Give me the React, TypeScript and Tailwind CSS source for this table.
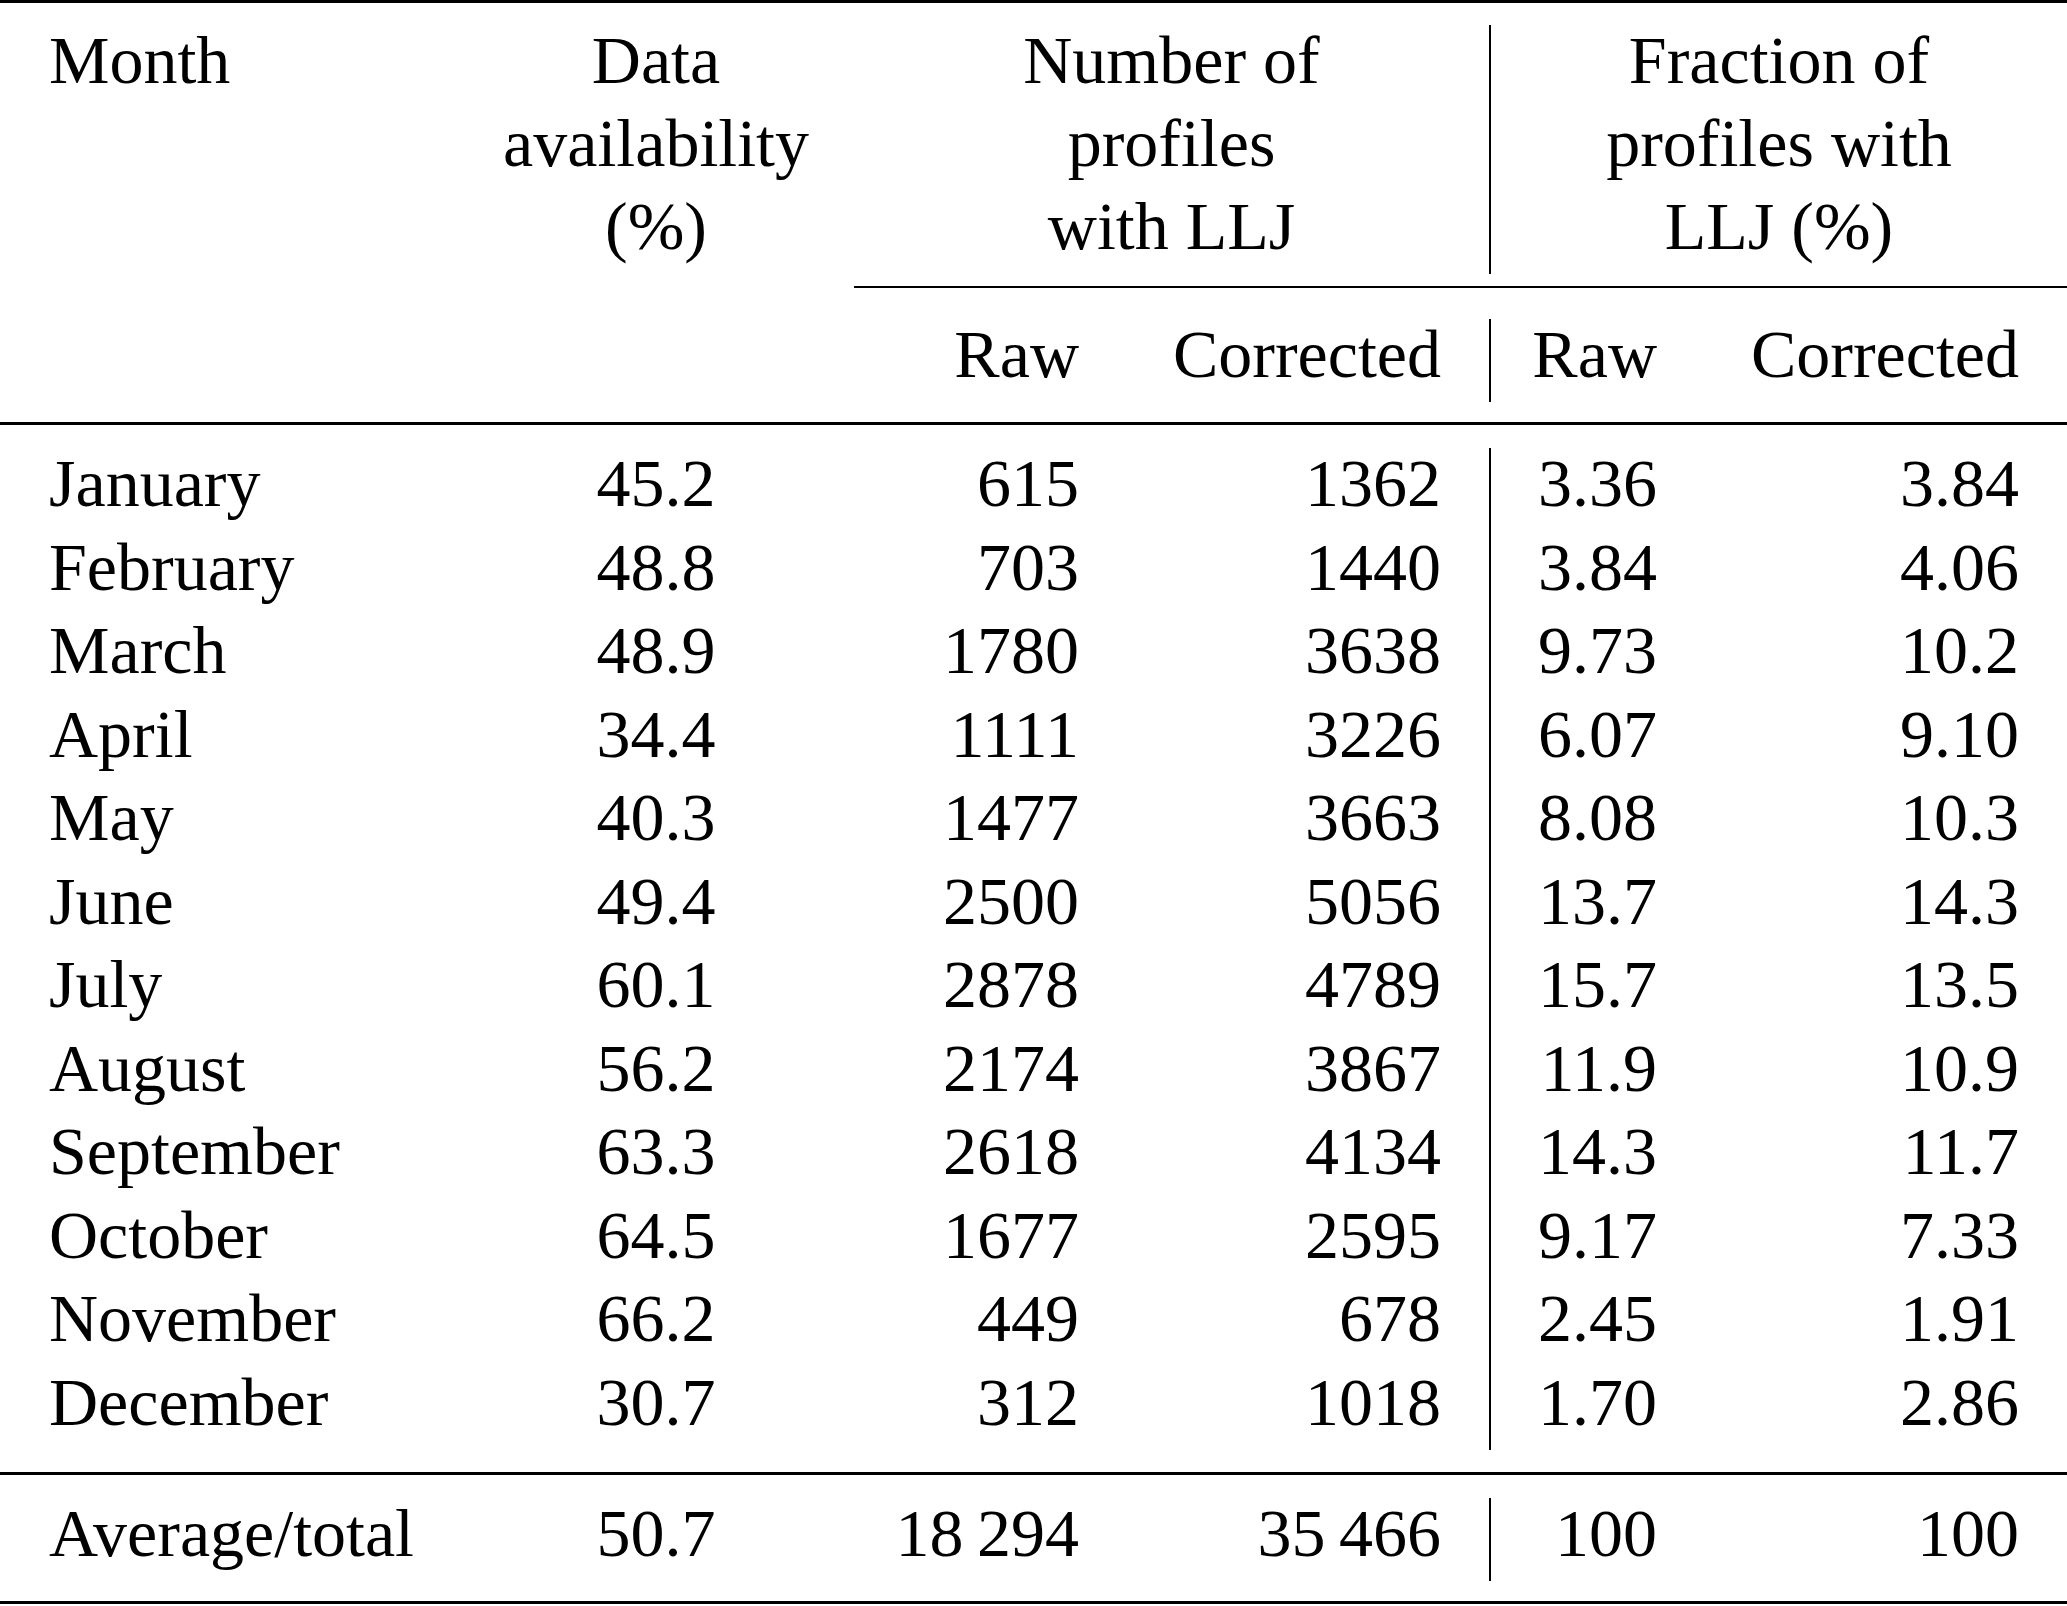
import React from 'react'

const grid = 'grid grid-cols-[458px_396px_273px_362px_216px_362px]'

const rows = [
    ['January', '45.2', '615', '1362', '3.36', '3.84'],
    ['February', '48.8', '703', '1440', '3.84', '4.06'],
    ['March', '48.9', '1780', '3638', '9.73', '10.2'],
    ['April', '34.4', '1111', '3226', '6.07', '9.10'],
    ['May', '40.3', '1477', '3663', '8.08', '10.3'],
    ['June', '49.4', '2500', '5056', '13.7', '14.3'],
    ['July', '60.1', '2878', '4789', '15.7', '13.5'],
    ['August', '56.2', '2174', '3867', '11.9', '10.9'],
    ['September', '63.3', '2618', '4134', '14.3', '11.7'],
    ['October', '64.5', '1677', '2595', '9.17', '7.33'],
    ['November', '66.2', '449', '678', '2.45', '1.91'],
    ['December', '30.7', '312', '1018', '1.70', '2.86'],
]

// text sits 6px higher than its cell so the column rule runs like a LaTeX strut
const Cell = ({ className = '', children }: { className?: string; children?: React.ReactNode }) => (
    <div className={`pb-[6px] ${className}`}>
        <div className="-mt-[6px]">{children}</div>
    </div>
)

const Row = ({ cells }: { cells: string[] }) => (
    <>
        <Cell className="pl-[49px]">{cells[0]}</Cell>
        <Cell className="text-center">{cells[1]}</Cell>
        <Cell className="text-right pr-[48px]">{cells[2]}</Cell>
        <Cell className="text-right pr-[48px]">{cells[3]}</Cell>
        <Cell className="text-right pr-[48px] border-l-2 border-black">{cells[4]}</Cell>
        <Cell className="text-right pr-[48px]">{cells[5]}</Cell>
    </>
)

const App = () => {
    return (
        <div className="w-[2067px] h-[1606px] bg-white text-black font-['Liberation_Serif',serif] text-[68px] leading-[83px]">
            <div className="h-[3px] bg-black" />

            {/* header */}
            <div className={`${grid} mt-[22px]`}>
                <Cell className="pl-[49px]">Month</Cell>
                <Cell className="text-center">Data<br />availability<br />(%)</Cell>
                <Cell className="col-span-2 text-center">Number of<br />profiles<br />with LLJ</Cell>
                <Cell className="col-span-2 text-center border-l-2 border-black">Fraction of<br />profiles with<br />LLJ (%)</Cell>
            </div>
            <div className={`${grid} mt-[12px]`}>
                <div className="col-start-3 col-span-4 h-[2px] bg-black" />
            </div>
            <div className={`${grid} mt-[31px]`}>
                <Cell />
                <Cell />
                <Cell className="text-right pr-[48px]">Raw</Cell>
                <Cell className="text-right pr-[48px]">Corrected</Cell>
                <Cell className="text-right pr-[48px] border-l-2 border-black">Raw</Cell>
                <Cell className="text-right pr-[48px]">Corrected</Cell>
            </div>
            <div className="h-[3px] bg-black mt-[20px]" />

            {/* body */}
            <div className={`${grid} mt-[23px] leading-[83.5px]`}>
                {rows.map((r) => (
                    <Row key={r[0]} cells={r} />
                ))}
            </div>
            <div className="h-[3px] bg-black mt-[22px]" />

            <div className={`${grid} mt-[23px]`}>
                <Row cells={['Average/total', '50.7', '18\u2009294', '35\u2009466', '100', '100']} />
            </div>
            <div className="h-[3px] bg-black mt-[20px]" />
        </div>
    )
}

export default App
